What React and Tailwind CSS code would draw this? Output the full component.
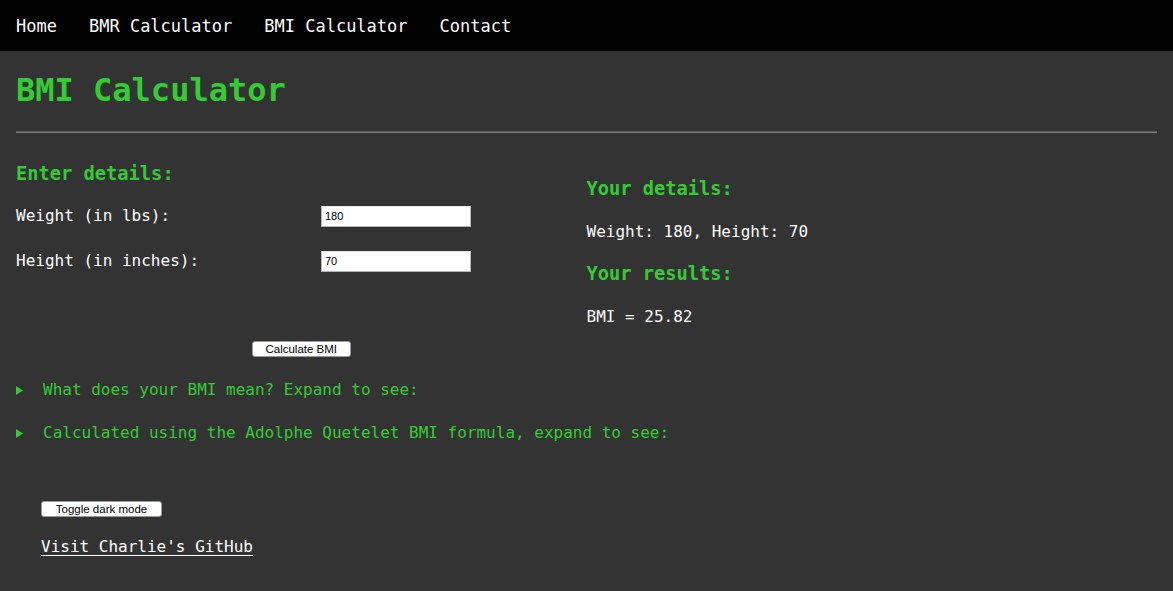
import React, { useState } from "react";

const mono = "font-['DejaVu_Sans_Mono','Liberation_Mono',monospace]";

const Disclosure = ({ label }) => {
  return (
    <div className="flex items-center h-[22px] text-[#32cd32] text-[16px]">
      <span className="w-[27px] flex items-center">
        <svg width="7" height="9" viewBox="0 0 7 9">
          <path d="M0 0 L7 4.5 L0 9 Z" fill="#32cd32" />
        </svg>
      </span>
      <span>{label}</span>
    </div>
  );
};

const App = () => {
  const [weight, setWeight] = useState("180");
  const [height, setHeight] = useState("70");
  const bmi = ((703 * Number(weight)) / (Number(height) * Number(height))).toFixed(2);

  return (
    <div className={`min-h-[591px] bg-[#333333] text-white ${mono}`}>
      {/* Top nav */}
      <nav className="h-[51px] pt-[2px] bg-black flex items-center text-[17px] text-white">
        <a className="px-4">Home</a>
        <a className="px-4">BMR Calculator</a>
        <a className="px-4">BMI Calculator</a>
        <a className="px-4">Contact</a>
      </nav>

      <div className="px-4">
        <h1 className="text-[32px] leading-[37px] font-bold text-[#32cd32] mt-[21px] mb-[22px]">
          BMI Calculator
        </h1>
        <div className="border-t border-b border-t-[#5c5c5c] border-b-[#7a7a7a]" />

        <div className="grid grid-cols-2">
          {/* Left column: inputs */}
          <div>
            <h3 className="text-[18.72px] leading-[22px] font-bold text-[#32cd32] mt-[30px]">
              Enter details:
            </h3>
            <div className="flex items-center mt-[20px] h-[22px] text-[16px]">
              <span className="w-[305px]">Weight (in lbs):</span>
              <input
                value={weight}
                onChange={(e) => setWeight(e.target.value)}
                className="w-[150px] h-[21px] bg-white text-black text-[11px] font-['Liberation_Sans',Arial,sans-serif] px-[3px] border border-[#b5b5b5] border-t-[#e5e5e5] outline-none"
              />
            </div>
            <div className="flex items-center mt-[23px] h-[22px] text-[16px]">
              <span className="w-[305px]">Height (in inches):</span>
              <input
                value={height}
                onChange={(e) => setHeight(e.target.value)}
                className="w-[150px] h-[21px] bg-white text-black text-[11px] font-['Liberation_Sans',Arial,sans-serif] px-[3px] border border-[#b5b5b5] border-t-[#e5e5e5] outline-none"
              />
            </div>
            <div className="flex justify-center mt-[69px]">
              <button className="w-[99px] h-[16px] bg-white text-black text-[11.5px] leading-[14px] font-['Liberation_Sans',Arial,sans-serif] rounded-[3px] border border-[#9a9a9a]">
                Calculate BMI
              </button>
            </div>
          </div>

          {/* Right column: results */}
          <div>
            <h3 className="text-[18.72px] leading-[22px] font-bold text-[#32cd32] mt-[45px]">
              Your details:
            </h3>
            <p className="text-[16px] leading-[20px] font-medium mt-[22px]">
              Weight: {weight}, Height: {height}
            </p>
            <h3 className="text-[18.72px] leading-[22px] font-bold text-[#32cd32] mt-[21px]">
              Your results:
            </h3>
            <p className="text-[16px] leading-[20px] font-medium mt-[22px]">BMI = {bmi}</p>
          </div>
        </div>

        <div className="mt-[22px]">
          <Disclosure label="What does your BMI mean? Expand to see:" />
        </div>
        <div className="mt-[21px]">
          <Disclosure label="Calculated using the Adolphe Quetelet BMI formula, expand to see:" />
        </div>

        <div className="pl-[25px] mt-[52px] pb-[30px]">
          <button className="w-[121px] h-[16px] bg-white text-black text-[11.5px] leading-[14px] font-['Liberation_Sans',Arial,sans-serif] rounded-[3px] border border-[#9a9a9a]">
            Toggle dark mode
          </button>
          <div className="mt-[15px]">
            <a className="text-[16px] underline underline-offset-[3px] text-white">
              Visit Charlie's GitHub
            </a>
          </div>
        </div>
      </div>
    </div>
  );
};

export default App;
